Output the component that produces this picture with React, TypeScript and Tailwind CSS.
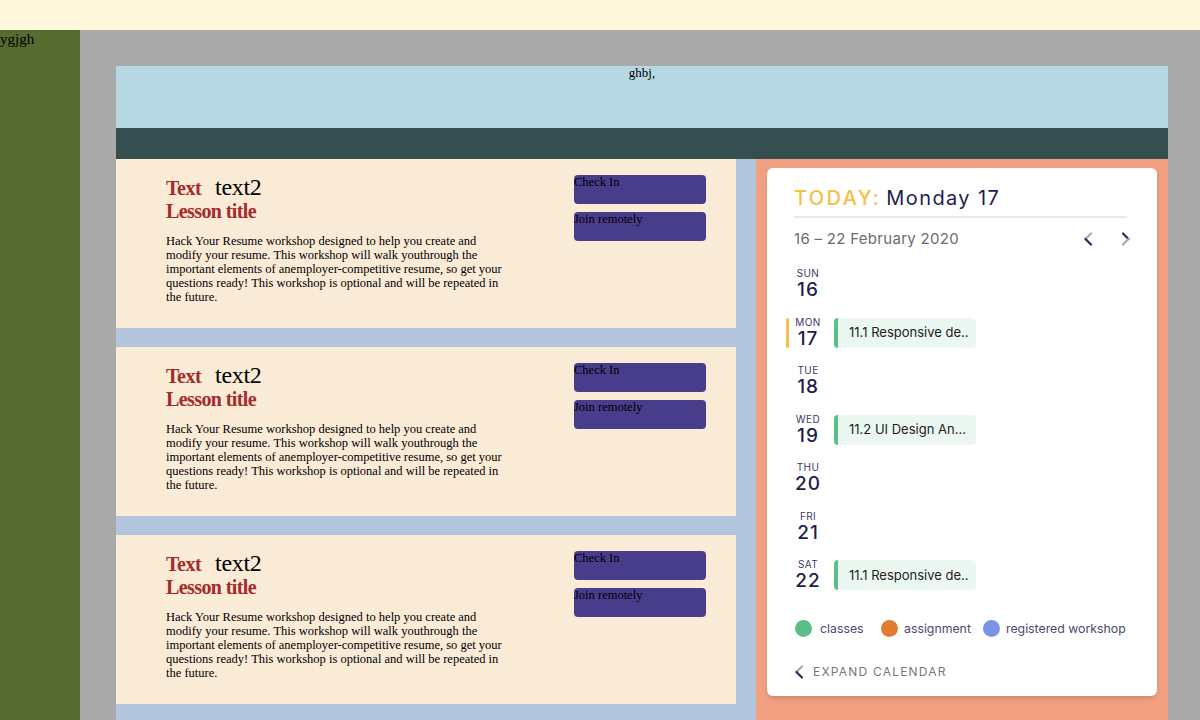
import React from 'react';

const serif = { fontFamily: '"Liberation Serif", "Times New Roman", serif' };

const LessonCard: React.FC = () => (
    <div className="h-[169px] bg-[#faebd7] flex justify-between pl-[50px] pr-[30px] pt-[16px] font-['Liberation_Serif',serif] text-black">
        <div className="w-[338px]">
            <div className="flex items-baseline h-[24px] leading-[24px]">
                <span className="font-bold text-[20px] tracking-[-0.5px] text-[#a52a2a]">Text</span>
                <span className="text-[24px] tracking-[-0.3px] ml-[14px]">text2</span>
            </div>
            <div className="font-bold text-[20px] leading-[24px] tracking-[-0.6px] text-[#a52a2a]">Lesson title</div>
            <p className="mt-[11px] text-[12.5px] leading-[14px]">
                Hack Your Resume workshop designed to help you create and modify your resume. This workshop will walk youthrough the important elements of anemployer-competitive resume, so get your questions ready! This workshop is optional and will be repeated in the future.
            </p>
        </div>
        <div className="flex flex-col gap-[8px]">
            <button className="w-[132px] h-[29px] rounded-[4px] bg-[#483d8b] text-left text-[12.5px] leading-[14px] text-black flex items-start">Check In</button>
            <button className="w-[132px] h-[29px] rounded-[4px] bg-[#483d8b] text-left text-[12.5px] leading-[14px] text-black flex items-start">Join remotely</button>
        </div>
    </div>
);

const days = [
    { d: 'SUN', n: 16 },
    { d: 'MON', n: 17, today: true, ev: '11.1 Responsive de..' },
    { d: 'TUE', n: 18 },
    { d: 'WED', n: 19, ev: '11.2 UI Design An...' },
    { d: 'THU', n: 20 },
    { d: 'FRI', n: 21 },
    { d: 'SAT', n: 22, ev: '11.1 Responsive de..' },
];

const Chevron: React.FC<{ dir: 'left' | 'right'; className?: string }> = ({ dir, className }) => (
    <svg width="10" height="14" viewBox="0 0 10 14" className={className}>
        {dir === 'left' ? (
            <>
                <path d="M8 1.5 L2.5 7" stroke="#a5a3bd" strokeWidth="2.2" strokeLinecap="round" fill="none" />
                <path d="M2.5 7 L8 12.5" stroke="#2b2858" strokeWidth="2.2" strokeLinecap="round" fill="none" />
            </>
        ) : (
            <>
                <path d="M2 1.5 L7.5 7" stroke="#2b2858" strokeWidth="2.2" strokeLinecap="round" fill="none" />
                <path d="M7.5 7 L2 12.5" stroke="#a5a3bd" strokeWidth="2.2" strokeLinecap="round" fill="none" />
            </>
        )}
    </svg>
);

const Calendar: React.FC = () => (
    <div className="bg-white rounded-[6px] shadow-md h-[528px] pt-[16px] font-['Inter',sans-serif]">
        <div className="pl-[27px] pr-[30px]">
            <div className="text-[20px] leading-[28px] pb-[4px] border-b-2 border-[#e8e8ea]">
                <span className="text-[#f4c045] tracking-[0.12em] font-medium">TODAY:</span>
                <span className="text-[#1f1d4f] tracking-[0.07em] ml-[5px]">Monday 17</span>
            </div>
            <div className="flex items-center justify-between mt-[9px] h-[24px]">
                <span className="text-[15px] text-[#6b6b70] tracking-[0.02em]">16 – 22 February 2020</span>
                <div className="flex items-center gap-[28px] -mr-[4px]">
                    <Chevron dir="left" />
                    <Chevron dir="right" />
                </div>
            </div>
        </div>
        <div className="px-[19px] mt-[9px] flex flex-col">
            {days.map((x) => (
                <div key={x.d} className="flex items-center h-[48.5px]">
                    <div className={`w-[3px] h-[30px] rounded-full ${x.today ? 'bg-[#f4c045]' : ''}`} />
                    <div className="w-[38px] flex flex-col items-center text-[#1f1d4f]">
                        <span className="text-[10px] leading-[11px] tracking-[0.04em] text-[#3a3868]">{x.d}</span>
                        <span className="text-[19px] leading-[21px] font-medium tracking-[0.05em]">{x.n}</span>
                    </div>
                    {x.ev && (
                        <div className="ml-[7px] w-[142px] h-[30px] rounded-[4px] bg-[#ebf8f1] border-l-[4px] border-[#5bbf8a] flex items-center pl-[11px] text-[13px] text-[#222]">
                            {x.ev}
                        </div>
                    )}
                </div>
            ))}
        </div>
        <div className="pl-[28px] mt-[20px] flex items-center text-[12.3px] text-[#4a4870] whitespace-nowrap">
            <span className="w-[17px] h-[17px] shrink-0 rounded-full bg-[#5bbf8a]" />
            <span className="ml-[8px] w-[42px]">classes</span>
            <span className="ml-[19px] w-[17px] h-[17px] shrink-0 rounded-full bg-[#e07b30]" />
            <span className="ml-[6px] w-[67px]">assignment</span>
            <span className="ml-[12px] w-[17px] h-[17px] shrink-0 rounded-full bg-[#7b93e6]" />
            <span className="ml-[6px]">registered workshop</span>
        </div>
        <div className="px-[27px] mt-[25px] flex items-center gap-[9px]">
            <Chevron dir="left" />
            <span className="text-[12px] tracking-[0.1em] text-[#77767e]">EXPAND CALENDAR</span>
        </div>
    </div>
);

export default function App() {
    return (
        <div className="min-h-screen bg-[#a9a9a9]" style={serif}>
            <div className="h-[30px] bg-[#fff8dc]" />
            <div className="flex">
                <div className="w-[80px] shrink-0 bg-[#556b2f] text-[15px] leading-[16px] pt-[1px] overflow-hidden">ygjgh</div>
                <div className="flex-1 bg-[#a9a9a9] pt-[36px] pl-[36px] pr-[32px]">
                    <div className="h-[62px] bg-[#b6d8e3] text-center text-[13px] leading-[14px]">ghbj,</div>
                    <div className="h-[31px] bg-[#354e50]" />
                    <div className="flex">
                        <div className="w-[640px] bg-[#b3c4dd] pr-[20px] flex flex-col gap-[19px] pb-[19px]">
                            <LessonCard />
                            <LessonCard />
                            <LessonCard />
                        </div>
                        <div className="flex-1 bg-[#f1a182] px-[11px] pt-[9px]">
                            <Calendar />
                        </div>
                    </div>
                </div>
            </div>
        </div>
    );
}
